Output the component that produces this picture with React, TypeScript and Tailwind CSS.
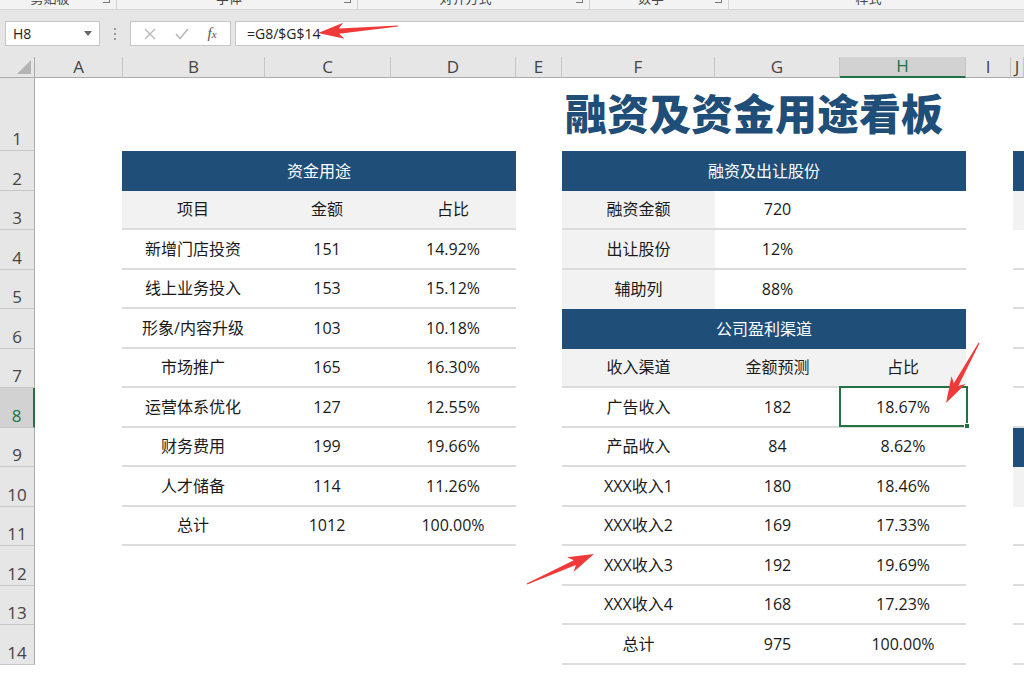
import React from "react";

const FONT = "font-['Open_Sans','Noto_Sans_CJK_SC',sans-serif]";

const columns = ["A", "B", "C", "D", "E", "F", "G", "H", "I", "J"];
const rows = [1, 2, 3, 4, 5, 6, 7, 8, 9, 10, 11, 12, 13, 14];

const usage = [
  ["新增门店投资", "151", "14.92%"],
  ["线上业务投入", "153", "15.12%"],
  ["形象/内容升级", "103", "10.18%"],
  ["市场推广", "165", "16.30%"],
  ["运营体系优化", "127", "12.55%"],
  ["财务费用", "199", "19.66%"],
  ["人才储备", "114", "11.26%"],
  ["总计", "1012", "100.00%"],
];

const channels = [
  ["广告收入", "182", "18.67%"],
  ["产品收入", "84", "8.62%"],
  ["XXX收入1", "180", "18.46%"],
  ["XXX收入2", "169", "17.33%"],
  ["XXX收入3", "192", "19.69%"],
  ["XXX收入4", "168", "17.23%"],
  ["总计", "975", "100.00%"],
];

// tapered red arrow like a screenshot annotation
function arrowPoints(x1: number, y1: number, x2: number, y2: number) {
  const dx = x2 - x1;
  const dy = y2 - y1;
  const len = Math.hypot(dx, dy);
  const ux = dx / len;
  const uy = dy / len;
  const nx = -uy;
  const ny = ux;
  const head = 26;
  const wing = 8;
  const neck = 2.6;
  const tail = 0.6;
  const barb = 5;
  const bx = x2 - ux * head;
  const by = y2 - uy * head;
  const pts = [
    [x1 + nx * tail, y1 + ny * tail],
    [bx + ux * barb + nx * neck, by + uy * barb + ny * neck],
    [bx + nx * wing, by + ny * wing],
    [x2, y2],
    [bx - nx * wing, by - ny * wing],
    [bx + ux * barb - nx * neck, by + uy * barb - ny * neck],
    [x1 - nx * tail, y1 - ny * tail],
  ];
  return pts.map((p) => p.join(",")).join(" ");
}

function Ribbon() {
  const groups = [
    { label: "剪贴板", w: "w-[117px]" },
    { label: "字体", w: "w-[241px]" },
    { label: "对齐方式", w: "w-[232px]" },
    { label: "数字", w: "w-[139px]" },
    { label: "样式", w: "flex-1" },
  ];
  return (
    <div className="h-[10px] bg-[#f3f3f3] flex overflow-hidden border-b border-[#d6d6d6]">
      {groups.map((g, i) => (
        <div
          key={i}
          className={`${g.w} relative h-full flex justify-center ${i < 4 ? "border-r border-[#d4d4d4]" : ""}`}
        >
          <span className="text-[13px] leading-none text-[#444] -mt-[8px] pr-4">{g.label}</span>
          {i < 4 && (
            <span className="absolute right-[6px] -top-[4px] w-[7px] h-[7px] border-r border-b border-[#777]" />
          )}
        </div>
      ))}
    </div>
  );
}

function FormulaBar() {
  return (
    <div className="h-[47px] bg-[#e6e6e6] flex items-center">
      <div className="ml-[5px] w-[95px] h-[25px] bg-white border border-[#c6c6c6] flex items-center justify-between px-[7px]">
        <span className="text-[14px] text-[#222]">H8</span>
        <span className="w-0 h-0 border-l-[4px] border-r-[4px] border-t-[5px] border-l-transparent border-r-transparent border-t-[#666]" />
      </div>
      <div className="w-[30px] flex flex-col items-center gap-[3px]">
        <span className="w-[2px] h-[2px] bg-[#999]" />
        <span className="w-[2px] h-[2px] bg-[#999]" />
        <span className="w-[2px] h-[2px] bg-[#999]" />
      </div>
      <div className="w-[101px] h-[25px] bg-white border border-[#c6c6c6] flex items-center justify-around px-[4px]">
        <svg width="12" height="12" viewBox="0 0 12 12">
          <path d="M1 1 L11 11 M11 1 L1 11" stroke="#b8b8b8" strokeWidth="1.4" fill="none" />
        </svg>
        <svg width="14" height="12" viewBox="0 0 14 12">
          <path d="M1 6 L5 10.5 L13 1" stroke="#b8b8b8" strokeWidth="1.6" fill="none" />
        </svg>
        <span className="font-['Liberation_Serif',serif] italic text-[15px] text-[#555] leading-none">
          f<span className="text-[11px]">x</span>
        </span>
      </div>
      <div className="ml-[4px] flex-1 h-[25px] bg-white border border-[#c6c6c6] border-r-0 flex items-center pl-[11px]">
        <span className="text-[14px] text-[#222]">=G8/$G$14</span>
      </div>
    </div>
  );
}

function Line({ children, gray, last }: { children: React.ReactNode; gray?: boolean; last?: boolean }) {
  return (
    <div
      className={`h-[39.5px] grid grid-cols-[142px_126px_1fr] items-center text-center text-[16px] text-[#1a1a1a] ${gray ? "bg-[#f2f2f2]" : ""} ${last ? "" : "border-b-2 border-[#dcdcdc]"}`}
    >
      {children}
    </div>
  );
}

function UsageTable() {
  return (
    <div className="col-start-3 col-span-3 row-start-3 row-span-10 -ml-px flex flex-col">
      <div className="h-[39.5px] bg-[#1f4e79] text-white text-[16px] flex items-center justify-center">资金用途</div>
      <Line gray>
        <span>项目</span>
        <span>金额</span>
        <span>占比</span>
      </Line>
      {usage.map((r) => (
        <Line key={r[0]}>
          <span>{r[0]}</span>
          <span>{r[1]}</span>
          <span>{r[2]}</span>
        </Line>
      ))}
    </div>
  );
}

function RightRow({ children, gray }: { children: React.ReactNode; gray?: boolean }) {
  return (
    <div
      className={`h-[39.5px] grid grid-cols-[153px_125px_1fr] items-stretch text-center text-[16px] text-[#1a1a1a] border-b-2 border-[#dcdcdc] ${gray ? "bg-[#f2f2f2]" : ""}`}
    >
      {children}
    </div>
  );
}

function Cell({ children, className = "" }: { children?: React.ReactNode; className?: string }) {
  return <div className={`flex items-center justify-center ${className}`}>{children}</div>;
}

function FundingTable() {
  return (
    <div className="col-start-7 col-span-3 row-start-3 row-span-13 flex flex-col">
      <div className="h-[39.5px] bg-[#1f4e79] text-white text-[16px] flex items-center justify-center">融资及出让股份</div>
      {[
        ["融资金额", "720"],
        ["出让股份", "12%"],
        ["辅助列", "88%"],
      ].map((r, i) => (
        <div
          key={r[0]}
          className={`h-[39.5px] grid grid-cols-[153px_125px_1fr] text-[16px] text-[#1a1a1a] ${i < 2 ? "border-b-2 border-[#dcdcdc]" : ""}`}
        >
          <Cell className="bg-[#f2f2f2]">{r[0]}</Cell>
          <Cell>{r[1]}</Cell>
          <Cell />
        </div>
      ))}
      <div className="h-[39.5px] bg-[#1f4e79] text-white text-[16px] flex items-center justify-center">公司盈利渠道</div>
      <RightRow gray>
        <Cell>收入渠道</Cell>
        <Cell>金额预测</Cell>
        <Cell>占比</Cell>
      </RightRow>
      {channels.map((r, i) => (
        <RightRow key={r[0]}>
          <Cell>{r[0]}</Cell>
          <Cell>{r[1]}</Cell>
          <Cell className="relative">
            {r[2]}
            {i === 0 && (
              <>
                <span className="absolute -left-px -top-[2px] -right-[2px] -bottom-[1px] border-2 border-[#217346]" />
                <span className="absolute -right-[4px] -bottom-[3px] w-[6px] h-[6px] bg-[#217346] border border-white" />
              </>
            )}
          </Cell>
        </RightRow>
      ))}
    </div>
  );
}

// the next table, cut off at the right edge of the window
function EdgeTable() {
  const kinds = ["blue", "gray", "w", "w", "w", "w", "w", "blue", "gray", "w", "w", "w", "w"];
  return (
    <div className="col-start-11 row-start-3 row-span-13 ml-[2px] flex flex-col">
      {kinds.map((k, i) => (
        <div
          key={i}
          className={`h-[39.5px] ${k === "blue" ? "bg-[#1f4e79]" : k === "gray" ? "bg-[#f2f2f2]" : "border-b-2 border-[#dcdcdc]"}`}
        />
      ))}
    </div>
  );
}

export default function App() {
  return (
    <div className={`relative w-[1024px] h-[675px] overflow-hidden bg-white ${FONT}`}>
      <Ribbon />
      <FormulaBar />
      <div className="grid grid-cols-[35px_88px_142px_126px_125px_46px_153px_125px_126px_45px_1fr] grid-rows-[21px_73px_repeat(13,39.5px)]">
        {/* select-all corner */}
        <div className="bg-[#e6e6e6] border-r border-b border-[#ababab] flex items-end justify-end p-[3px]">
          <svg width="14" height="14" viewBox="0 0 14 14">
            <polygon points="14,0 14,14 0,14" fill="#b4b4b4" />
          </svg>
        </div>
        {columns.map((c) => (
          <div
            key={c}
            className={`flex items-end justify-center text-[17px] leading-none pb-[2px] border-r border-[#c6c6c6] ${
              c === "H" ? "bg-[#d2d2d2] border-b-2 border-b-[#217346] text-[#217346]" : "bg-[#e6e6e6] border-b border-b-[#ababab] text-[#444]"
            }`}
          >
            {c}
          </div>
        ))}
        {rows.map((r) => (
          <div
            key={r}
            style={{ gridRowStart: r + 1 }}
            className={`col-start-1 flex items-end justify-center text-[17px] leading-none pb-[3px] border-b border-[#c6c6c6] ${
              r === 8 ? "bg-[#d2d2d2] border-r-2 border-r-[#217346] text-[#217346]" : "bg-[#e6e6e6] border-r border-r-[#ababab] text-[#444]"
            }`}
          >
            {r}
          </div>
        ))}
        <div className="col-start-7 col-span-4 row-start-2 flex items-end pl-[3px] pb-[18px]">
          <span className="font-['Noto_Sans_CJK_SC',sans-serif] font-black text-[42px] leading-none text-[#1f4e79]">
            融资及资金用途看板
          </span>
        </div>
        <UsageTable />
        <FundingTable />
        <EdgeTable />
      </div>
      <svg className="absolute inset-0 pointer-events-none" width="1024" height="675">
        <polygon points={arrowPoints(398, 26, 318, 33)} fill="#ef3a3a" />
        <polygon points={arrowPoints(979, 343, 946, 403)} fill="#ef3a3a" />
        <polygon points={arrowPoints(527, 584, 594, 554)} fill="#ef3a3a" />
      </svg>
    </div>
  );
}
